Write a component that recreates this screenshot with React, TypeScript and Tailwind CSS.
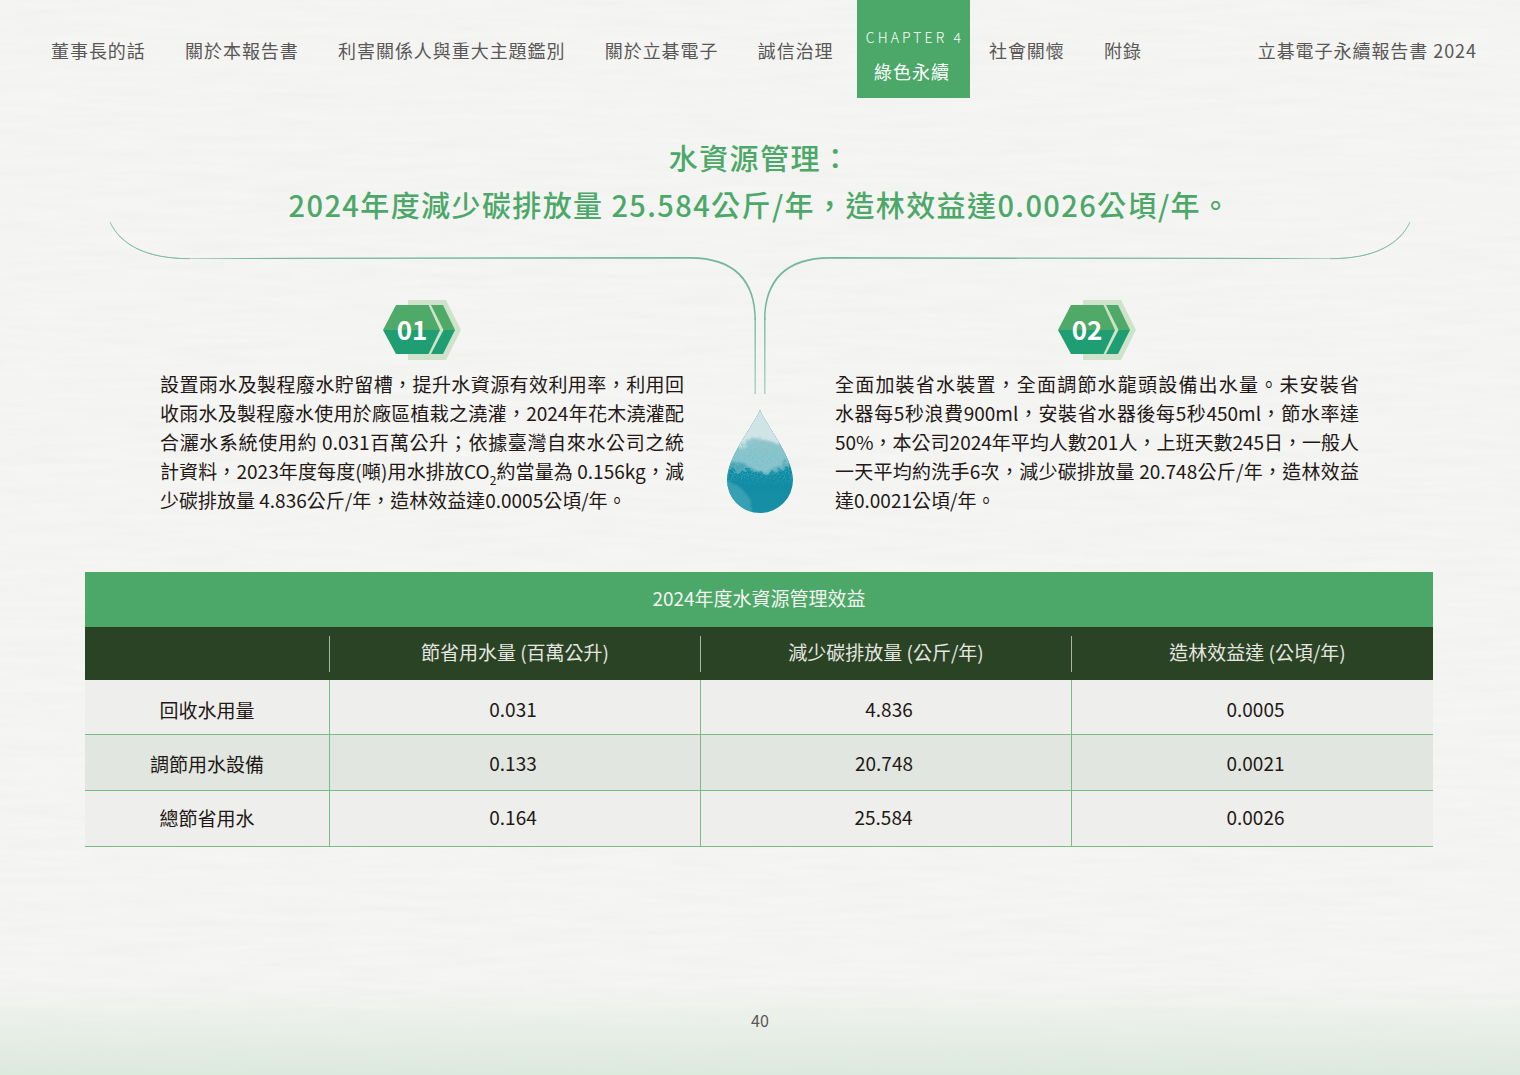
import React from "react";

const navLeft = ["董事長的話", "關於本報告書", "利害關係人與重大主題鑑別", "關於立碁電子", "誠信治理"];
const navRight = ["社會關懷", "附錄"];

function PaperBackground() {
  return (
    <svg className="absolute inset-0 pointer-events-none" width="1520" height="1075" aria-hidden="true">
      <defs>
        <filter id="paper" x="0" y="0" width="100%" height="100%">
          <feTurbulence type="fractalNoise" baseFrequency="0.012 0.14" numOctaves="4" seed="7" />
          <feColorMatrix type="matrix" values="0 0 0 0 0.6  0 0 0 0 0.6  0 0 0 0 0.58  0.6 0 0 0 -0.2" />
        </filter>
      </defs>
      <rect width="1520" height="1075" fill="#f5f5f3" />
      <rect width="1520" height="1075" filter="url(#paper)" opacity="0.28" />
    </svg>
  );
}

function Curves() {
  return (
    <svg className="absolute left-0 top-0 pointer-events-none" width="1520" height="400" aria-hidden="true">
      <defs>
        <linearGradient id="fade" x1="0" y1="300" x2="0" y2="394" gradientUnits="userSpaceOnUse">
          <stop offset="0" stopColor="#6fb39b" />
          <stop offset="1" stopColor="#a9d2c0" />
        </linearGradient>
      </defs>
      <g fill="#74b69f">
        <path d="M110 222 C120 244 145 259 190 259 L690 258.8 C734 258.8 754.5 282 754.5 320 L756 320 C756 280 735 257 690 257 L300 257.8 L190 258.4 C146 258.4 121 244 110 222 Z" />
        <path d="M1410 222 C1400 244 1375 259 1330 259 L830 258.8 C786 258.8 765.5 282 765.5 320 L764 320 C764 280 785 257 830 257 L1220 257.8 L1330 258.4 C1374 258.4 1399 244 1410 222 Z" />
      </g>
      <g fill="none" stroke="#74b69f" strokeWidth="0.7">
        <path d="M110 222 C120 244 145 258.7 190 258.7" />
        <path d="M1410 222 C1400 244 1375 258.7 1330 258.7" />
      </g>
      <path d="M755.2 318 V394 M764.8 318 V394" fill="none" stroke="url(#fade)" strokeWidth="1.4" />
    </svg>
  );
}

function Drop() {
  const shape = "M33 0 C39 15 66 47 66 70 A33 33 0 0 1 0 70 C0 47 27 15 33 0 Z";
  return (
    <svg className="absolute left-[727px] top-[410px]" width="66" height="103" viewBox="0 0 66 103" aria-hidden="true">
      <defs>
        <clipPath id="dropClip"><path d={shape} /></clipPath>
        <linearGradient id="dropBase" x1="0" y1="0" x2="0" y2="1">
          <stop offset="0" stopColor="#1f93a8" />
          <stop offset="0.6" stopColor="#0f8aa3" />
          <stop offset="1" stopColor="#1890a7" />
        </linearGradient>
        <linearGradient id="speckFade" x1="0" y1="0" x2="0" y2="1">
          <stop offset="0.3" stopColor="#fff" stopOpacity="0" />
          <stop offset="0.45" stopColor="#fff" stopOpacity="0.55" />
          <stop offset="0.62" stopColor="#fff" stopOpacity="0.4" />
          <stop offset="0.75" stopColor="#fff" stopOpacity="0" />
        </linearGradient>
        <mask id="speckMask"><rect width="66" height="103" fill="url(#speckFade)" /></mask>
        <filter id="wash" x="-30%" y="-30%" width="160%" height="160%">
          <feTurbulence type="fractalNoise" baseFrequency="0.12" numOctaves="4" seed="4" result="n" />
          <feDisplacementMap in="SourceGraphic" in2="n" scale="18" />
          <feGaussianBlur stdDeviation="0.5" />
        </filter>
        <filter id="wash2" x="-30%" y="-30%" width="160%" height="160%">
          <feTurbulence type="fractalNoise" baseFrequency="0.25" numOctaves="3" seed="9" result="n" />
          <feDisplacementMap in="SourceGraphic" in2="n" scale="12" />
          <feGaussianBlur stdDeviation="0.8" />
        </filter>
        <filter id="speck" x="0" y="0" width="100%" height="100%">
          <feTurbulence type="fractalNoise" baseFrequency="0.7" numOctaves="2" seed="3" />
          <feColorMatrix type="matrix" values="0 0 0 0 0.1  0 0 0 0 0.55  0 0 0 0 0.65  5 0 0 0 -2.3" />
        </filter>
      </defs>
      <g clipPath="url(#dropClip)">
        <rect width="66" height="103" fill="url(#dropBase)" />
        <path d="M-10 -5 H76 V58 C60 52 50 66 30 62 C18 60 8 64 -10 56 Z" fill="#4fa3b4" filter="url(#wash)" />
        <path d="M-10 -5 H76 V44 C58 46 52 66 34 62 C26 60 18 54 8 52 L-10 50 Z" fill="#8fc4cb" filter="url(#wash2)" />
        <path d="M-10 -5 H76 V36 C64 42 54 34 46 32 C38 28 24 26 14 36 L-10 42 Z" fill="#cfe5e5" filter="url(#wash2)" />
        <rect width="66" height="103" filter="url(#speck)" mask="url(#speckMask)" />
        <path d="M0 72 C10 72 18 80 24 92 C26 98 24 103 20 103 L0 103 Z" fill="#3fa5b6" opacity="0.8" filter="url(#wash2)" />
      </g>
    </svg>
  );
}

function Badge({ n }: { n: string }) {
  return (
    <div className="relative w-[78px] h-[60px]">
      <svg width="78" height="60" viewBox="0 0 78 60" aria-hidden="true">
        <polygon points="25,0 63,0 78,30 63,60 25,60" fill="#cfe3cb" />
        <polygon points="0,30 13,5 45.5,5 57,30" fill="#4fa968" />
        <polygon points="0,30 13,54 45.5,54 57,30" fill="#1f9d73" />
        <polygon points="48,5 60,5 72,30 60.5,30" fill="#4fa968" />
        <polygon points="60.5,30 72,30 60,54 48,54" fill="#1f9d73" />
      </svg>
      <span className="absolute left-[13px] top-[11px] w-[32px] text-center text-[26px] leading-[36px] font-bold text-white">{n}</span>
    </div>
  );
}

function Para({ lines, last }: { lines: React.ReactNode[]; last: React.ReactNode }) {
  return (
    <div className="w-[524px] text-[19px] leading-[29px] text-[#231815]">
      {lines.map((l, i) => (
        <div key={i} className="whitespace-nowrap [text-align:justify] [text-align-last:justify]">{l}</div>
      ))}
      <div className="whitespace-nowrap">{last}</div>
    </div>
  );
}

const rows = [
  { name: "回收水用量", a: "0.031", b: "4.836", c: "0.0005", bg: "bg-[#eeefec]", h: "h-[55px]", pad: "pt-[4px]", bPad: "pl-[6px]" },
  { name: "調節用水設備", a: "0.133", b: "20.748", c: "0.0021", bg: "bg-[#e1e7e0]", h: "h-[56px]", pad: "pt-[2px]", bPad: "pr-[4px]" },
  { name: "總節省用水", a: "0.164", b: "25.584", c: "0.0026", bg: "bg-[#eeefec]", h: "h-[56px]", pad: "pb-[2px]", bPad: "pr-[5px]" },
];

const grid = "grid grid-cols-[244px_371px_371px_362px]";

export default function App() {
  return (
    <div className="relative w-[1520px] h-[1075px] overflow-hidden bg-[#f5f5f3] [font-family:'Noto_Sans_CJK_TC','Noto_Sans',sans-serif]">
      <PaperBackground />
      <div className="absolute left-0 right-0 bottom-0 h-[90px] bg-gradient-to-t from-[#dce9dd] to-transparent" />
      <Curves />
      <Drop />

      <div className="relative flex flex-col h-full">
        <header className="flex items-start pl-[51px] pr-[43px] h-[98px] text-[18px] text-[#595757] tracking-[0.95px]">
          <nav className="flex gap-[39.3px] pt-[37px] leading-[26px]">
            {navLeft.map((t) => <span key={t} className="whitespace-nowrap">{t}</span>)}
          </nav>
          <div className="ml-[23.4px] w-[113px] h-[98px] shrink-0 bg-[#4ca868] text-white flex flex-col items-center">
            <span className="mt-[27px] ml-[3px] text-[14px] leading-[20px] tracking-[3.1px] font-light whitespace-nowrap">CHAPTER 4</span>
            <span className="mt-[11px] text-[18px] leading-[26px] -ml-[3px]">綠色永續</span>
          </div>
          <nav className="ml-[19px] flex gap-[39.3px] pt-[37px] leading-[26px]">
            {navRight.map((t) => <span key={t} className="whitespace-nowrap">{t}</span>)}
          </nav>
          <span className="ml-auto pt-[37px] leading-[26px] whitespace-nowrap">立碁電子永續報告書 2024</span>
        </header>

        <div className="mt-[36px] text-center text-[29px] leading-[47px] tracking-[1.4px] font-medium text-[#4ca868]">
          <div>水資源管理：</div>
          <div>2024年度減少碳排放量 25.584公斤/年，造林效益達0.0026公頃/年。</div>
        </div>

        <div className="mt-[72px] flex pl-[160px] gap-[151px]">
          <div className="flex flex-col w-[524px]">
            <div className="ml-[223px] mb-[8.5px]"><Badge n="01" /></div>
            <Para
              lines={[
                "設置雨水及製程廢水貯留槽，提升水資源有效利用率，利用回",
                "收雨水及製程廢水使用於廠區植栽之澆灌，2024年花木澆灌配",
                "合灑水系統使用約 0.031百萬公升；依據臺灣自來水公司之統",
                <>計資料，2023年度每度(噸)用水排放CO<sub className="text-[12px] [vertical-align:-3px]">2</sub>約當量為 0.156kg，減</>,
              ]}
              last="少碳排放量 4.836公斤/年，造林效益達0.0005公頃/年。"
            />
          </div>
          <div className="flex flex-col w-[524px]">
            <div className="ml-[223px] mb-[8.5px]"><Badge n="02" /></div>
            <Para
              lines={[
                "全面加裝省水裝置，全面調節水龍頭設備出水量。未安裝省",
                "水器每5秒浪費900ml，安裝省水器後每5秒450ml，節水率達",
                "50%，本公司2024年平均人數201人，上班天數245日，一般人",
                "一天平均約洗手6次，減少碳排放量 20.748公斤/年，造林效益",
              ]}
              last="達0.0021公頃/年。"
            />
          </div>
        </div>

        <div className="mt-[58.5px] ml-[85px] w-[1348px] text-[19px]">
          <div className="h-[55px] pb-[3px] bg-[#4ca868] flex items-center justify-center text-[#f4f4f0]">2024年度水資源管理效益</div>
          <div className={`${grid} h-[53px] bg-[#2a4325] text-[#e6e6e0] items-center text-center`}>
            <div className="h-[36px]" />
            <div className="h-[36px] pb-[2px] border-l border-[#a8b4a2] flex items-center justify-center">節省用水量 (百萬公升)</div>
            <div className="h-[36px] pb-[2px] border-l border-[#a8b4a2] flex items-center justify-center">減少碳排放量 (公斤/年)</div>
            <div className="h-[36px] pb-[2px] border-l border-[#a8b4a2] pl-[10px] flex items-center justify-center">造林效益達 (公頃/年)</div>
          </div>
          {rows.map((r) => (
            <div key={r.name} className={`${grid} ${r.h} ${r.bg} text-[#231815] text-center border-b border-[#78bd84]`}>
              <div className={`${r.pad} flex items-center justify-center`}><span className="mt-[2px]">{r.name}</span></div>
              <div className={`${r.pad} pr-[4px] border-l border-[#78bd84] flex items-center justify-center`}>{r.a}</div>
              <div className={`${r.pad} ${r.bPad} border-l border-[#78bd84] flex items-center justify-center`}>{r.b}</div>
              <div className={`${r.pad} pl-[6px] border-l border-[#78bd84] flex items-center justify-center`}>{r.c}</div>
            </div>
          ))}
        </div>

        <div className="mt-auto mb-[43px] text-center text-[16px] leading-[24px] text-[#595757]">40</div>
      </div>
    </div>
  );
}
